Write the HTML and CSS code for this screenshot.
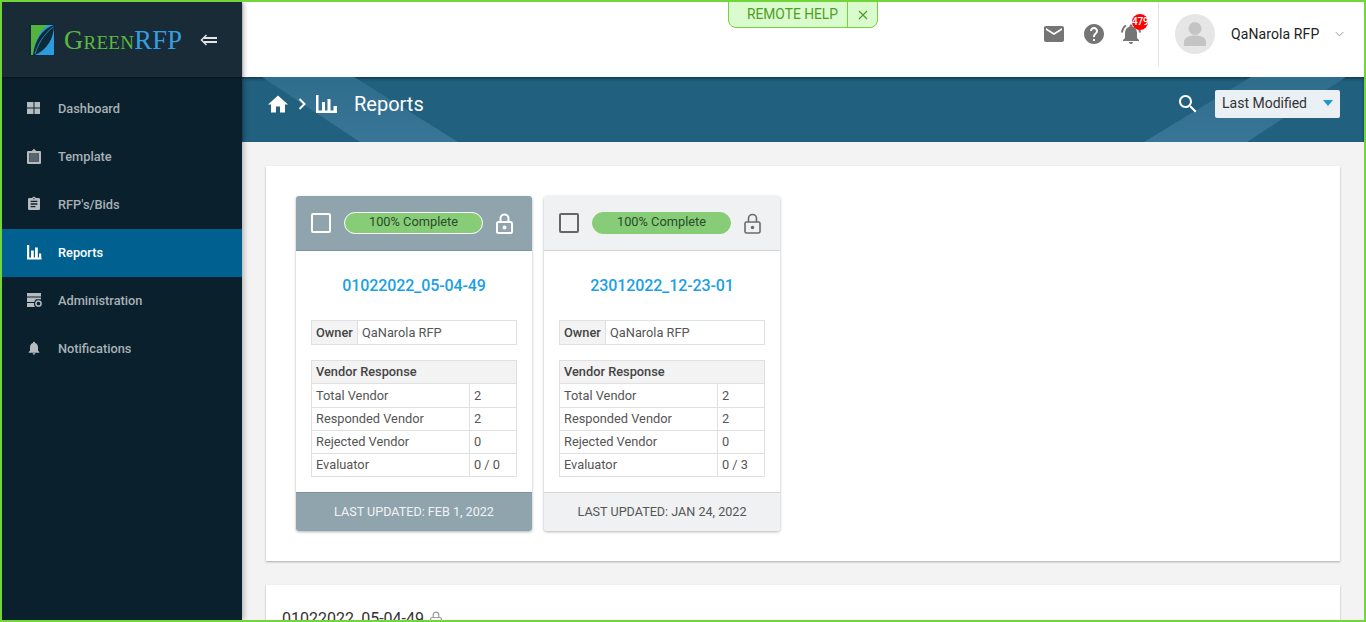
FILE: index.html
```html
<!DOCTYPE html>
<html lang="en">
<head>
    <meta charset="UTF-8">
    <meta name="viewport" content="width=device-width, initial-scale=1.0">
    <title>GreenRFP - Reports</title>
    <link rel="stylesheet" href="styles.css">
</head>
<body>
    <!-- Sidebar -->
    <aside class="sidebar">
        <div class="brand">
            <svg class="brand-mark" viewBox="0 0 26 32">
                <rect x="0" y="0" width="26" height="32" fill="#0d2a38"/>
                <rect x="2" y="1" width="23" height="30" fill="#2a9bdc"/>
                <path d="M2 1H19C13 5 6 14 4 31H2Z" fill="#55b23c"/>
                <path d="M25 1C25 14 18 26 6 31H4C6 16 13 5 25 1Z" fill="#0d2a38"/>
                <path d="M6 30C9 20 14 11 24 3" fill="none" stroke="#2a9bdc" stroke-width="0.8"/>
            </svg>
            <span class="brand-name"><span class="brand-green">Green</span><span class="brand-blue">RFP</span></span>
            <svg class="brand-toggle" viewBox="0 0 17 12">
                <path d="M6.500 1L1.500 6l5 5" fill="none" stroke="#e3e6e8" stroke-width="1.500"/>
                <path d="M4 4h13M4 8h13" fill="none" stroke="#e3e6e8" stroke-width="2"/>
            </svg>
        </div>
        <nav class="nav">
            <a class="nav-item">
                <svg class="nav-icon" viewBox="0 0 16 16"><path d="M1 2h6.500v5.500H1zM8.500 2H14v5.500H8.500zM1 8.500h6.500V14H1zM8.500 8.500H14V14H8.500z"/></svg>
                Dashboard
            </a>
            <a class="nav-item">
                <svg class="nav-icon" viewBox="0 0 16 16"><path d="M3.500 5h9v8.500h-9z" opacity="0.45"/><path fill-rule="evenodd" d="M2 3h3.800L8 .8 10.200 3H14a1 1 0 0 1 1 1v11a1 1 0 0 1-1 1H2a1 1 0 0 1-1-1V4a1 1 0 0 1 1-1ZM3.200 5v8.800h9.600V5Z"/></svg>
                Template
            </a>
            <a class="nav-item">
                <svg class="nav-icon" viewBox="0 0 24 24"><path d="M19 3h-4.180C14.400 1.840 13.300 1 12 1c-1.300 0-2.400.84-2.820 2H5c-1.100 0-2 .9-2 2v14c0 1.100.9 2 2 2h14c1.100 0 2-.9 2-2V5c0-1.100-.9-2-2-2zm-7 0c.55 0 1 .45 1 1s-.45 1-1 1-1-.45-1-1 .45-1 1-1zm2 14H7v-2h7v2zm3-4H7v-2h10v2zm0-4H7V7h10v2z"/></svg>
                RFP's/Bids
            </a>
            <a class="nav-item active">
                <svg class="nav-icon" viewBox="0 0 16 16"><path d="M1 1h2.200v13H1zM5 6.500h2.800V14H5zM9 3.500h2.800V14H9zM13 9.500h2.200V14H13zM1 13.500h14.500V15.500H1z"/></svg>
                Reports
            </a>
            <a class="nav-item">
                <svg class="nav-icon" viewBox="0 0 16 16"><path d="M1 1h14v3.500H1zM1 5.500h14v1.800H10A4.500 4.500 0 0 0 8.300 10H1zM1 11h7.100A4.500 4.500 0 0 0 9 15H1z"/><circle cx="12.500" cy="11.500" r="2.600" fill="none" stroke="currentColor" stroke-width="1.500"/></svg>
                Administration
            </a>
            <a class="nav-item">
                <svg class="nav-icon" viewBox="0 0 24 24"><path d="M12 22c1.100 0 2-.9 2-2h-4c0 1.100.89 2 2 2zm6-6v-5c0-3.070-1.640-5.640-4.500-6.320V4c0-.83-.67-1.500-1.500-1.500s-1.500.67-1.500 1.500v.68C7.630 5.360 6 7.920 6 11v5l-2 2v1h16v-1l-2-2z"/></svg>
                Notifications
            </a>
        </nav>
    </aside>

    <div class="main">
        <!-- Top bar -->
        <header class="topbar">
            <div class="remote-help">
                <span class="remote-label">REMOTE HELP</span>
                <span class="remote-close">
                    <svg viewBox="0 0 10 10"><path d="M1 1l8 8M9 1l-8 8" stroke="#4f9f1e" stroke-width="1.200" fill="none"/></svg>
                </span>
            </div>
            <div class="top-icons">
                <svg class="top-icon" viewBox="2 4 20 16"><path d="M20 4H4c-1.100 0-1.990.9-1.990 2L2 18c0 1.100.9 2 2 2h16c1.100 0 2-.9 2-2V6c0-1.100-.9-2-2-2zm0 4l-8 5-8-5V6l8 5 8-5v2z"/></svg>
                <svg class="top-icon help" viewBox="2 2 20 20"><path d="M12 2C6.480 2 2 6.480 2 12s4.480 10 10 10 10-4.480 10-10S17.520 2 12 2zm1 17h-2v-2h2v2zm2.070-7.750l-.9.92C13.450 12.900 13 13.500 13 15h-2v-.5c0-1.100.45-2.100 1.170-2.830l1.240-1.260c.37-.36.59-.86.59-1.410 0-1.100-.9-2-2-2s-2 .9-2 2H8c0-2.210 1.790-4 4-4s4 1.790 4 4c0 .88-.36 1.680-.93 2.250z"/></svg>
                <span class="bell">
                    <svg class="top-icon bell-icon" viewBox="2 2 20 20"><path d="M7.580 4.080L6.150 2.650C3.750 4.480 2.170 7.300 2.030 10.500h2c.15-2.650 1.510-4.970 3.550-6.420zM19.970 10.500h2c-.15-3.200-1.730-6.020-4.120-7.850l-1.420 1.430c2.020 1.450 3.390 3.770 3.540 6.420zM18 11c0-3.070-1.640-5.640-4.500-6.320V4c0-.83-.67-1.500-1.500-1.500s-1.500.67-1.500 1.500v.68C7.630 5.360 6 7.920 6 11v5l-2 2v1h16v-1l-2-2v-5zm-6 11c.14 0 .27-.01.4-.04.65-.14 1.180-.58 1.440-1.180.1-.24.16-.5.16-.78h-4c0 1.100.9 2 2 2z"/></svg>
                    <span class="badge">479</span>
                </span>
            </div>
            <div class="user">
                <span class="avatar">
                    <svg viewBox="0 0 40 40"><circle cx="20" cy="14.500" r="6.500" fill="#c4c4c4"/><path d="M9 32v-4c0-4 4-6.500 11-6.500S31 24 31 28v4Z" fill="#c4c4c4"/></svg>
                </span>
                <span class="user-name">QaNarola RFP</span>
                <svg class="user-caret" viewBox="0 0 10 6"><path d="M1 1l4 4 4-4" fill="none" stroke="#888" stroke-width="1"/></svg>
            </div>
        </header>

        <!-- Page banner -->
        <section class="banner">
            <svg class="crumb-home" viewBox="2 3 20 17"><path d="M10 20v-6h4v6h5v-8h3L12 3 2 12h3v8z"/></svg>
            <svg class="crumb-sep" viewBox="0 0 8 12"><path d="M1.500 1l5 5-5 5" fill="none" stroke="#fff" stroke-width="2"/></svg>
            <svg class="crumb-chart" viewBox="0 0 21 18"><path d="M0 0h2.500v18H0zM6 7h3v11H6zM11.500 4h3v14h-3zM17.500 11H21v7h-3.500zM0 15.500h21V18H0z"/></svg>
            <h1 class="banner-title">Reports</h1>
            <svg class="banner-search" viewBox="3 3 18 18"><path d="M15.500 14h-.79l-.28-.27C15.410 12.590 16 11.110 16 9.500 16 5.910 13.090 3 9.500 3S3 5.910 3 9.500 5.910 16 9.500 16c1.610 0 3.090-.59 4.230-1.570l.27.28v.79l5 4.990L20.490 19l-4.990-5zm-6 0C7.010 14 5 11.990 5 9.500S7.010 5 9.500 5 14 7.010 14 9.500 11.990 14 9.500 14z"/></svg>
            <div class="sort-select">
                <span>Last Modified</span>
                <i class="sort-caret"></i>
            </div>
        </section>

        <div class="content">
            <section class="panel cards">
                <article class="card selected">
                    <div class="card-head">
                        <span class="checkbox"></span>
                        <span class="progress">100% Complete</span>
                        <svg class="lock" viewBox="0 0 17 21"><rect x="1" y="9" width="15" height="11" rx="1.500"/><path d="M4.500 9V5.500a4 4 0 0 1 8 0V9"/><circle class="lock-dot" cx="8.500" cy="14.500" r="1"/></svg>
                    </div>
                    <div class="card-body">
                        <a class="card-title">01022022_05-04-49</a>
                        <table class="owner-table">
                            <tr><th>Owner</th><td>QaNarola RFP</td></tr>
                        </table>
                        <table class="vendor-table">
                            <tr><th colspan="2">Vendor Response</th></tr>
                            <tr class="tall"><td>Total Vendor</td><td class="num">2</td></tr>
                            <tr><td>Responded Vendor</td><td class="num">2</td></tr>
                            <tr><td>Rejected Vendor</td><td class="num">0</td></tr>
                            <tr><td>Evaluator</td><td class="num">0 / 0</td></tr>
                        </table>
                    </div>
                    <div class="card-foot">LAST UPDATED: FEB 1, 2022</div>
                </article>

                <article class="card">
                    <div class="card-head">
                        <span class="checkbox"></span>
                        <span class="progress">100% Complete</span>
                        <svg class="lock" viewBox="0 0 17 21"><rect x="1" y="9" width="15" height="11" rx="1.500"/><path d="M4.500 9V5.500a4 4 0 0 1 8 0V9"/><circle class="lock-dot" cx="8.500" cy="14.500" r="1"/></svg>
                    </div>
                    <div class="card-body">
                        <a class="card-title">23012022_12-23-01</a>
                        <table class="owner-table">
                            <tr><th>Owner</th><td>QaNarola RFP</td></tr>
                        </table>
                        <table class="vendor-table">
                            <tr><th colspan="2">Vendor Response</th></tr>
                            <tr class="tall"><td>Total Vendor</td><td class="num">2</td></tr>
                            <tr><td>Responded Vendor</td><td class="num">2</td></tr>
                            <tr><td>Rejected Vendor</td><td class="num">0</td></tr>
                            <tr><td>Evaluator</td><td class="num">0 / 3</td></tr>
                        </table>
                    </div>
                    <div class="card-foot">LAST UPDATED: JAN 24, 2022</div>
                </article>
            </section>

            <section class="panel detail">
                <span class="detail-title">01022022_05-04-49</span>
                <svg class="detail-lock" viewBox="0 0 17 21"><rect x="1" y="9" width="15" height="11" rx="1.500"/><path d="M4.500 9V5.500a4 4 0 0 1 8 0V9"/></svg>
            </section>
        </div>
    </div>
</body>
</html>
```

FILE: styles.css
```css
* {
    box-sizing: border-box;
}
body {
    font-family: Roboto, "Liberation Sans", sans-serif;
    margin: 0;
    height: 100vh;
    overflow: hidden;
    display: flex;
    border: 2px solid #72d53a;
    background-color: #f3f3f3;
    color: #333;
}

/* Sidebar */
.sidebar {
    width: 240px;
    flex-shrink: 0;
    background-color: #0a202c;
    position: relative;
    z-index: 2;
    box-shadow: 2px 0 5px rgba(0, 0, 0, 0.25);
}
.brand {
    height: 75px;
    display: flex;
    align-items: center;
    padding-left: 27px;
    background-color: #1a2b38;
    box-shadow: 0 1px 2px rgba(0, 0, 0, 0.4);
}
.brand-mark {
    width: 26px;
    height: 32px;
    flex-shrink: 0;
}
.brand-name {
    font-family: "Liberation Serif", serif;
    font-variant: small-caps;
    font-size: 26.5px;
    margin-left: 9px;
    padding-top: 2px;
    letter-spacing: 0.3px;
    line-height: 1;
    white-space: nowrap;
}
.brand-green {
    color: #5cb83f;
}
.brand-blue {
    color: #359fe0;
}
.brand-toggle {
    width: 17px;
    height: 12px;
    margin-left: 18px;
    flex-shrink: 0;
}
.nav {
    padding-top: 7px;
    margin-top: 1px;
}
.nav-item {
    height: 48px;
    display: flex;
    align-items: center;
    padding-left: 24px;
    padding-bottom: 2px;
    font-size: 12.8px;
    font-weight: 500;
    color: #a8b1b6;
}
.nav-item.active {
    background-color: #006190;
    color: #fff;
}
.nav-icon {
    width: 16px;
    height: 16px;
    margin-right: 16px;
    fill: currentColor;
    color: #b5bbbe;
    flex-shrink: 0;
}
.nav-item.active .nav-icon {
    color: #fff;
}

/* Main column */
.main {
    flex: 1;
    min-width: 0;
    display: flex;
    flex-direction: column;
}
.topbar {
    height: 75px;
    flex-shrink: 0;
    background: #fff;
    display: flex;
    align-items: flex-start;
    justify-content: flex-end;
    position: relative;
}
.remote-help {
    position: absolute;
    left: 486px;
    top: -2px;
    width: 150px;
    height: 28px;
    display: flex;
    background-color: #d9fbcd;
    border: 1px solid #72d53a;
    border-radius: 0 0 8px 8px;
    font-size: 13.8px;
    color: #4f9f1e;
}
.remote-label {
    width: 119px;
    padding-left: 9px;
    text-align: center;
    line-height: 26px;
    border-right: 1px solid #72d53a;
    white-space: nowrap;
}
.remote-close {
    flex: 1;
    display: flex;
    align-items: center;
    justify-content: center;
    padding-top: 2px;
}
.remote-close svg {
    width: 10px;
    height: 10px;
}
.top-icons {
    display: flex;
    align-items: flex-start;
    padding-top: 22px;
}
.top-icon {
    width: 20px;
    height: 20px;
    fill: #757575;
    display: block;
}
.top-icon.help {
    margin-left: 20px;
}
.bell {
    display: block;
    position: relative;
    margin-left: 17px;
}
.badge {
    position: absolute;
    left: 11px;
    top: -10px;
    width: 16px;
    height: 16px;
    border-radius: 50%;
    background-color: #f00;
    color: #fff;
    font-size: 10px;
    font-weight: 500;
    line-height: 16px;
    text-align: center;
    letter-spacing: -0.2px;
    white-space: nowrap;
}
.user {
    width: 206px;
    height: 64px;
    margin-left: 17px;
    border-left: 1px solid #e3e3e3;
    display: flex;
    align-items: center;
    padding-left: 16px;
    color: #222;
}
.avatar {
    width: 40px;
    height: 40px;
    border-radius: 50%;
    background-color: #e6e6e6;
    overflow: hidden;
    flex-shrink: 0;
}
.avatar svg {
    display: block;
}
.user-name {
    margin-left: 16px;
    white-space: nowrap;
    letter-spacing: 0.1px;
    font-size: 14px;
}
.user-caret {
    width: 9px;
    height: 6px;
    margin-left: 16px;
}

/* Banner */
.banner {
    height: 65px;
    flex-shrink: 0;
    position: relative;
    display: flex;
    align-items: center;
    padding: 0 24px 11px 26px;
    background-color: #21607f;
    box-shadow: inset 0 2px 3px rgba(0, 0, 0, 0.35);
    color: #fff;
}
.banner::before,
.banner::after {
    content: "";
    position: absolute;
    top: 0;
    bottom: 0;
}
.banner::before {
    left: 20px;
    width: 196px;
    background: linear-gradient(to bottom, #2f6d8d, #397596);
    clip-path: polygon(0 0, 47% 0, 100% 100%, 50% 100%);
}
.banner::after {
    right: 18px;
    width: 202px;
    background: linear-gradient(to top, #397596, #2f6d8d);
    clip-path: polygon(53% 0, 100% 0, 51% 100%, 0 100%);
}
.banner > * {
    position: relative;
    z-index: 1;
}
.crumb-home {
    width: 20px;
    height: 18px;
    fill: #fff;
}
.crumb-sep {
    width: 8px;
    height: 12px;
    margin-left: 10px;
}
.crumb-chart {
    width: 21px;
    height: 18px;
    margin-left: 10px;
    fill: #fff;
}
.banner-title {
    margin: 0 0 0 17px;
    font-size: 20px;
    font-weight: 400;
    flex: 1;
}
.banner-search {
    width: 18px;
    height: 18px;
    fill: #fff;
    margin-right: 18px;
}
.sort-select {
    width: 125px;
    height: 28px;
    display: flex;
    align-items: center;
    justify-content: space-between;
    padding: 0 7px 2px;
    border-radius: 2px;
    background-color: #ebf0f4;
    color: #333;
    font-size: 14px;
}
.sort-caret {
    width: 0;
    height: 0;
    border-left: 5px solid transparent;
    border-right: 5px solid transparent;
    border-top: 6px solid #2196d3;
}

/* Content */
.content {
    flex: 1;
    padding: 24px 24px 0;
}
.panel {
    background: #fff;
    box-shadow: 0 1px 2px rgba(0, 0, 0, 0.3);
}
.cards {
    display: flex;
    gap: 12px;
    padding: 30px;
    margin-bottom: 24px;
}
.card {
    width: 236px;
    background: #fff;
    border-radius: 3px;
    box-shadow: 0 1px 3px rgba(0, 0, 0, 0.3);
    font-size: 12.8px;
}
.card-head {
    height: 55px;
    display: flex;
    align-items: center;
    padding: 0 17px 0 15px;
    background-color: #f0f1f3;
    border-bottom: 1px solid #d4d6d8;
    border-radius: 3px 3px 0 0;
}
.checkbox {
    width: 20px;
    height: 20px;
    flex-shrink: 0;
    border: 2px solid #666;
    border-radius: 2px;
}
.progress {
    width: 139px;
    height: 22px;
    margin-left: 13px;
    border-radius: 11px;
    background-color: #87cd78;
    border: 1px solid #87cd78;
    color: #2b4a2b;
    font-size: 12.8px;
    line-height: 17px;
    text-align: center;
}
.lock {
    width: 17px;
    height: 21px;
    margin-left: 13px;
    fill: none;
    stroke: #6b6b6b;
    stroke-width: 1.6;
    flex-shrink: 0;
}
.lock-dot {
    fill: #6b6b6b;
}
.card-body {
    height: 241px;
    padding: 0 15px;
}
.card-title {
    display: block;
    padding-top: 25px;
    height: 69px;
    text-align: center;
    color: #1b9fe6;
    font-size: 16px;
    font-weight: 500;
    line-height: 20px;
    letter-spacing: -0.1px;
}
table {
    width: 206px;
    border-collapse: collapse;
    color: #555;
}
th, td {
    border: 1px solid #e0e0e0;
    padding: 0 4px;
    text-align: left;
    font-weight: 400;
    height: 23px;
    line-height: 16px;
}
th {
    background-color: #f3f3f3;
    font-weight: 500;
    color: #444;
}
.owner-table {
    margin-bottom: 15px;
}
.owner-table th {
    width: 46px;
    height: 24px;
}
.owner-table td {
    height: 24px;
}
.tall td {
    height: 24px;
}
.vendor-table .num {
    width: 47px;
}
.card-foot {
    height: 39px;
    background-color: #f0f1f3;
    border-top: 1px solid #d4d6d8;
    border-radius: 0 0 3px 3px;
    text-align: center;
    line-height: 37px;
    font-size: 12.6px;
    color: #555;
}
.card.selected .card-head {
    background-color: #90a4ae;
    border-bottom-color: #7f939d;
}
.card.selected .checkbox {
    border-color: #fff;
}
.card.selected .progress {
    border-color: #fff;
}
.card.selected .lock {
    stroke: #fff;
    stroke-width: 2;
}
.card.selected .lock-dot {
    fill: #fff;
}
.card.selected .card-foot {
    background-color: #90a4ae;
    color: #f0f3f4;
    border-top-color: #7f939d;
}
.detail {
    height: 100px;
    padding: 24px 16px;
    display: flex;
    align-items: flex-start;
    color: #333;
    font-size: 16px;
}
.detail-lock {
    width: 12px;
    height: 15px;
    margin: 2px 0 0 6px;
    fill: none;
    stroke: #999;
    stroke-width: 1.6;
}
```
